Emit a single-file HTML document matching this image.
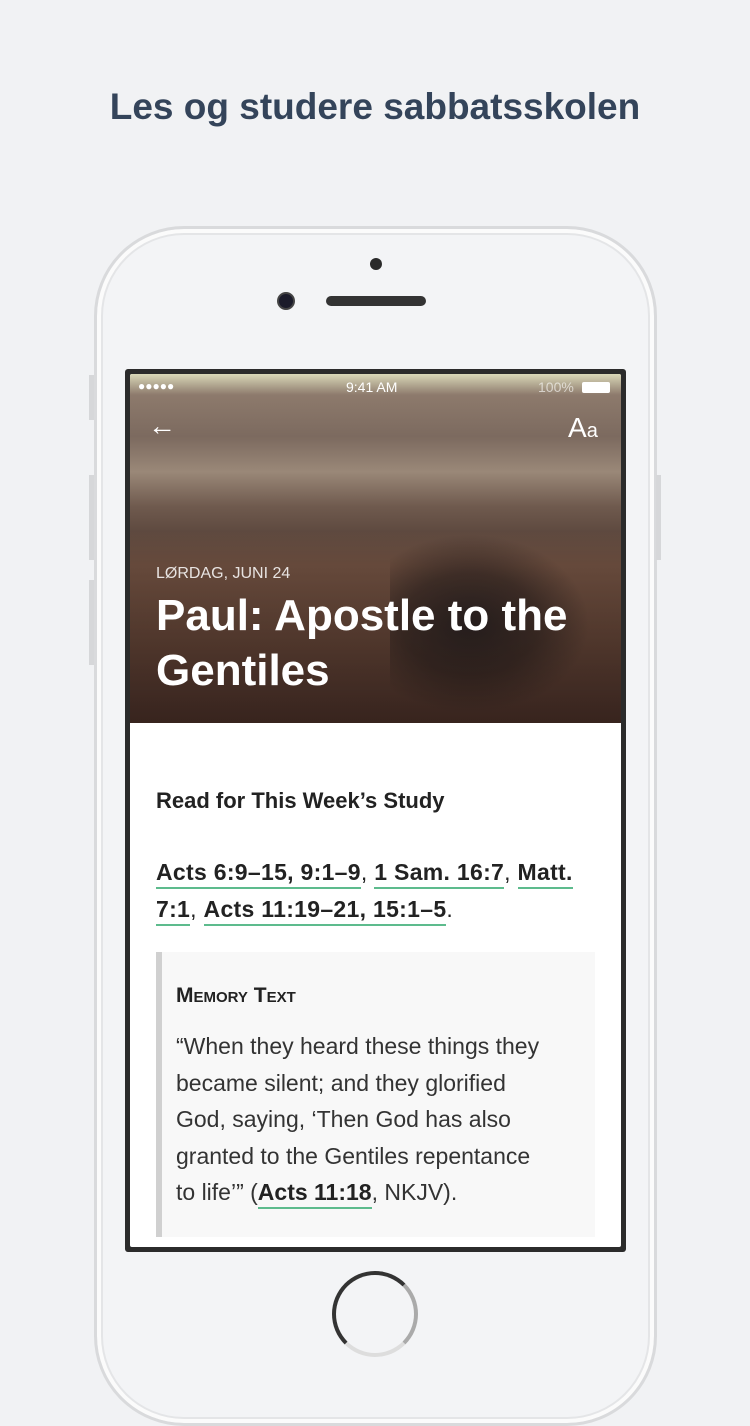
<!DOCTYPE html>
<html><head><meta charset="utf-8"><style>
*{margin:0;padding:0;box-sizing:border-box}
body{width:750px;height:1334px;background:#f1f2f4;position:relative;overflow:hidden;font-family:"Liberation Sans",sans-serif}
.h{position:absolute;top:86px;left:0;width:750px;text-align:center;font-size:37px;font-weight:bold;color:#34445a}
.phone{position:absolute;left:94px;top:226px;width:563px;height:1200px;border-radius:90px;background:#f3f4f6;border:3px solid #d9dadc;box-shadow:inset 0 0 0 4px #fbfbfb,inset 0 0 0 6px #e4e5e7}
.btn{position:absolute;background:#d6d7d9;width:5px}
.bez{position:absolute;left:125px;top:369px;width:501px;height:883px;background:#2b2b2b;border-radius:3px}
.scr{position:absolute;left:130px;top:374px;width:491px;height:873px;background:#fff;overflow:hidden;border-radius:2px}
.img{position:absolute;left:0;top:0;width:491px;height:349px;background:linear-gradient(180deg,#d9d8b8 0%,#8d7a6c 6%,#7c6a5f 18%,#9a8878 28%,#6f5a4e 38%,#5f4a40 45%,#6b4d3e 55%,#5e4134 75%,#4a3028 100%)}
.w{color:#fff;position:absolute}
.link{border-bottom:2px solid #5dbb8d;padding-bottom:2px}
.body{position:absolute;left:26px;font-family:"Liberation Sans",sans-serif;color:#222}
</style></head><body>
<div class="h">Les og studere sabbatsskolen</div>
<div class="phone"></div>
<div class="btn" style="left:89px;top:375px;height:45px"></div>
<div class="btn" style="left:89px;top:475px;height:85px"></div>
<div class="btn" style="left:89px;top:580px;height:85px"></div>
<div class="btn" style="left:656px;top:475px;height:85px"></div>
<div style="position:absolute;left:370px;top:258px;width:12px;height:12px;border-radius:50%;background:#2a2a2a"></div>
<div style="position:absolute;left:277px;top:292px;width:18px;height:18px;border-radius:50%;background:#1b1b2a;border:2px solid #444"></div>
<div style="position:absolute;left:326px;top:296px;width:100px;height:10px;border-radius:5px;background:#333"></div>
<div style="position:absolute;left:332px;top:1271px;width:86px;height:86px;border-radius:50%;border:4px solid #333;border-bottom-color:#ddd;border-right-color:#aaa"></div>
<div class="bez"></div>
<div class="scr">
 <div class="img">
  <div style="position:absolute;left:260px;top:160px;width:200px;height:180px;background:radial-gradient(ellipse at 40% 50%,#2a2120 0%,rgba(40,30,28,.6) 40%,rgba(0,0,0,0) 70%)"></div>
  <div style="position:absolute;left:0;top:150px;width:491px;height:199px;background:linear-gradient(180deg,rgba(0,0,0,0),rgba(0,0,0,.25))"></div>
 </div>
 <div class="w" style="left:8px;top:5px;font-size:12px">●●●●●</div>
 <div class="w" style="left:216px;top:5px;font-size:14px">9:41 AM</div>
 <div class="w" style="left:408px;top:5px;font-size:14px;opacity:.6">100%</div>
 <div style="position:absolute;left:452px;top:8px;width:28px;height:11px;background:#fff;border-radius:2px"></div>
 <div class="w" style="left:18px;top:36px;font-size:28px">←</div>
 <div class="w" style="left:438px;top:38px;font-size:28px">A<span style="font-size:20px">a</span></div>
 <div class="w" style="left:26px;top:191px;font-size:16px;opacity:.85">LØRDAG, JUNI 24</div>
 <div class="w" style="left:26px;top:214px;font-size:44px;font-weight:bold;line-height:55px;width:460px">Paul: Apostle to the Gentiles</div>
 <div class="body" style="top:414px;font-size:22px;font-weight:bold">Read for This Week’s Study</div>
 <div class="body" style="top:480px;font-size:23px;line-height:37px;width:450px;letter-spacing:.3px;white-space:nowrap"><b class="link">Acts 6:9–15, 9:1–9</b>, <b class="link">1 Sam. 16:7</b>, <b class="link">Matt.</b><br><b class="link">7:1</b>, <b class="link">Acts 11:19–21, 15:1–5</b>.</div>
 <div style="position:absolute;left:26px;top:578px;width:439px;height:285px;background:#f8f8f8;border-left:6px solid #d0d0d0"></div>
 <div class="body" style="left:46px;top:610px;font-size:21px;font-weight:bold;font-variant:small-caps">Memory Text</div>
 <div class="body" style="left:46px;top:654px;font-size:23px;line-height:36.5px;width:420px;color:#333;white-space:nowrap">“When they heard these things they<br>became silent; and they glorified<br>God, saying, ‘Then God has also<br>granted to the Gentiles repentance<br>to life’” (<b class="link" style="color:#222">Acts 11:18</b>, NKJV).</div>
</div>
</body></html>
